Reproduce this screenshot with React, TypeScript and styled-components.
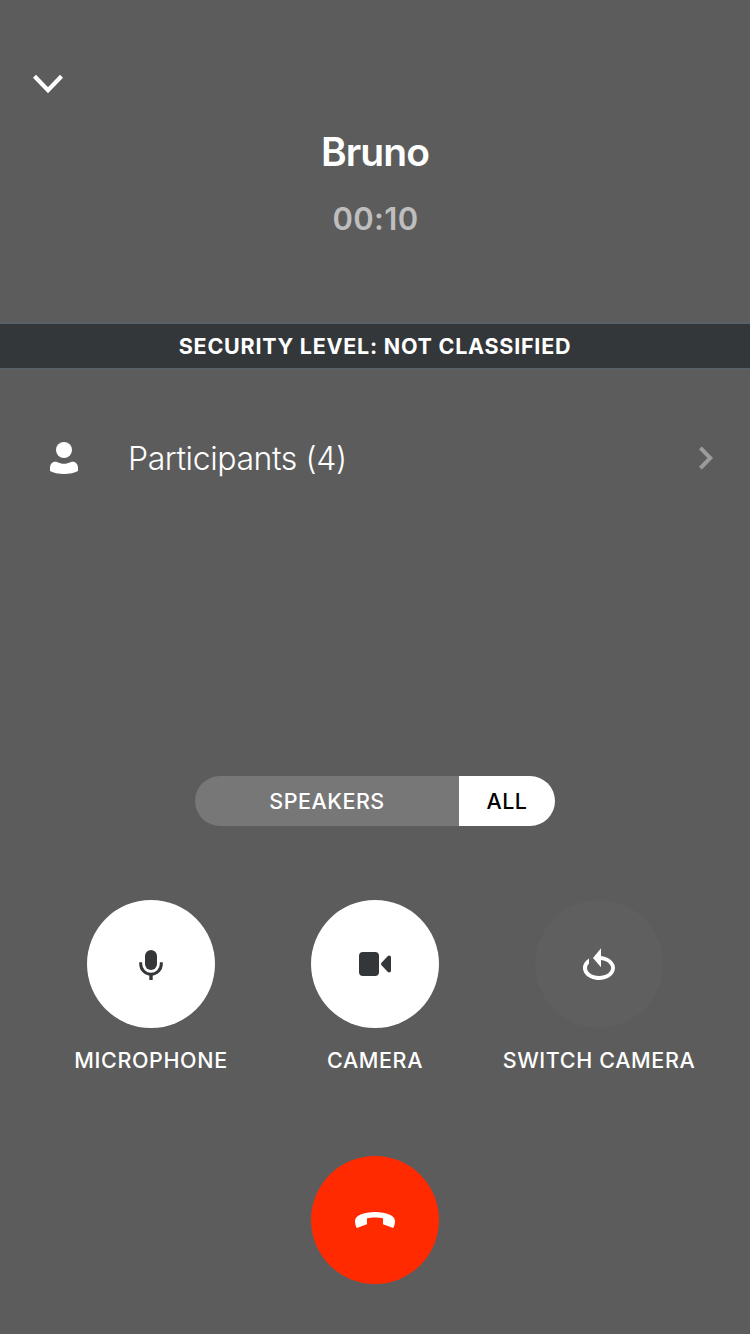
import React from 'react';
import styled, { createGlobalStyle } from 'styled-components';

const GlobalStyle = createGlobalStyle`
  * { box-sizing: border-box; }
  body { margin: 0; background: #5c5c5c; }
  button { border: 0; padding: 0; margin: 0; font: inherit; color: inherit; background: none; }
  svg { display: block; }
`;

const Screen = styled.main`
  width: 750px;
  height: 1334px;
  display: flex;
  flex-direction: column;
  background: #5c5c5c;
  color: #fff;
  font-family: Inter, 'Liberation Sans', sans-serif;
  white-space: nowrap;
  overflow: hidden;
`;

const Header = styled.header`
  height: 322px;
  display: flex;
  flex-direction: column;
  align-items: center;
`;

const MinimizeButton = styled.button`
  align-self: flex-start;
  margin: 74px 0 0 32px;
  height: 20px;
`;

const CallTitle = styled.h1`
  margin: 34px 0 0;
  font-size: 39px;
  line-height: 48px;
  font-weight: 600;
  letter-spacing: -0.9px;
`;

const Duration = styled.div`
  margin-top: 23px;
  padding-left: 1px;
  font-size: 31px;
  line-height: 40px;
  font-weight: 600;
  letter-spacing: 0.3px;
  color: #bebebe;
`;

const SecurityBanner = styled.div`
  height: 48px;
  border: solid #596168;
  border-width: 2px 0;
  background: #33373a;
  display: flex;
  align-items: center;
  justify-content: center;
  font-size: 21.5px;
  font-weight: 700;
  letter-spacing: 0.75px;
`;

const ParticipantsRow = styled.button`
  margin-top: 40px;
  height: 96px;
  padding: 0 36px 0 50px;
  display: flex;
  align-items: center;
  text-align: left;
`;

const RowLabel = styled.span`
  flex: 1;
  margin-left: 50px;
  font-size: 32px;
  font-weight: 300;
  letter-spacing: -0.4px;
`;

const Segments = styled.div`
  align-self: center;
  margin-top: 270px;
  width: 360px;
  height: 50px;
  border-radius: 25px;
  overflow: hidden;
  display: flex;
`;

const Segment = styled.button<{ $width: number; $selected?: boolean }>`
  width: ${p => p.$width}px;
  font-size: 21.5px;
  font-weight: 500;
  letter-spacing: 0.5px;
  background: ${p => (p.$selected ? '#fff' : '#777')};
  color: ${p => (p.$selected ? '#000' : '#fff')};
`;

const Controls = styled.div`
  margin-top: 74px;
  display: grid;
  grid-template-columns: repeat(3, 224px);
  justify-content: center;
`;

const Control = styled.div`
  display: flex;
  flex-direction: column;
  align-items: center;
`;

const RoundButton = styled.button<{ $fill: string }>`
  width: 128px;
  height: 128px;
  border-radius: 50%;
  background: ${p => p.$fill};
  display: flex;
  align-items: center;
  justify-content: center;
`;

const ControlLabel = styled.span`
  margin-top: 18px;
  font-size: 21.5px;
  line-height: 28px;
  font-weight: 500;
  letter-spacing: 0.63px;
`;

const Footer = styled.footer`
  margin-top: 82px;
  display: flex;
  justify-content: center;
`;

const MicIcon = () => (
  <svg width="32" height="32" viewBox="0 0 32 32">
    <rect x="10" y="2" width="12" height="20" rx="6" fill="#33373a" />
    <path d="M5.7 14.3V16a10.3 10.3 0 0 0 20.6 0v-1.7" fill="none" stroke="#33373a" strokeWidth="3" />
    <path d="M16 26v6" stroke="#33373a" strokeWidth="3.4" />
  </svg>
);

const CameraIcon = () => (
  <svg width="32" height="32" viewBox="0 0 32 32" fill="#33373a">
    <rect y="4" width="20" height="24" rx="4" />
    <path d="M22.5 14.8L28.6 8.3C30 6.9 32 7.6 32 9.5v13c0 1.9-2 2.6-3.4 1.2l-6.1-6.5a1.8 1.8 0 0 1 0-2.4z" />
  </svg>
);

const SwitchIcon = () => (
  <svg width="32" height="32" viewBox="0 0 32 32" fill="#fff">
    <path d="M18 .3L10 10l8 9.3v-7.2A12 8 0 1 1 6 15.6v-5A16 12 0 1 0 18 8.1z" />
  </svg>
);

const HangUpIcon = () => (
  <svg width="40" height="16" viewBox="0 0 40 16" fill="#fff">
    <path d="M0 9C0 3.5 8.5 0 20 0s20 3.5 20 9c0 2.5-.6 5-1.8 7L28 12.2V6.3c-2.5-.6-5-.9-8-.9s-5.5.3-8 .9v5.9L1.8 16C.6 14 0 11.5 0 9z" />
  </svg>
);

const PersonIcon = () => (
  <svg width="28" height="32" viewBox="0 0 28 32" fill="#fff">
    <circle cx="14" cy="8" r="8" />
    <path d="M0 26c0-3.8 2.2-6.2 5.2-6.2 2.6 0 4.3 2 8.8 2s6.2-2 8.8-2C25.8 19.8 28 22.2 28 26v3C24.5 31 19.5 32 14 32S3.5 31 0 29z" />
  </svg>
);

export default function App() {
  return (
    <>
      <GlobalStyle />
      <Screen>
        <Header>
          <MinimizeButton aria-label="Minimize call">
            <svg width="32" height="20" viewBox="0 0 32 20">
              <path d="M2.5 2.3L16 16.2L29.5 2.3" fill="none" stroke="#fff" strokeWidth="4.2" />
            </svg>
          </MinimizeButton>
          <CallTitle>Bruno</CallTitle>
          <Duration>00:10</Duration>
        </Header>
        <SecurityBanner>SECURITY LEVEL: NOT CLASSIFIED</SecurityBanner>
        <ParticipantsRow>
          <PersonIcon />
          <RowLabel>Participants (4)</RowLabel>
          <svg width="16" height="24" viewBox="0 0 16 24">
            <path d="M2.4 1.9L12.3 12L2.4 22.1" fill="none" stroke="#9b9b9b" strokeWidth="4" />
          </svg>
        </ParticipantsRow>
        <Segments>
          <Segment $width={264}>SPEAKERS</Segment>
          <Segment $width={96} $selected>ALL</Segment>
        </Segments>
        <Controls>
          <Control>
            <RoundButton $fill="#fff" aria-label="Microphone"><MicIcon /></RoundButton>
            <ControlLabel>MICROPHONE</ControlLabel>
          </Control>
          <Control>
            <RoundButton $fill="#fff" aria-label="Camera"><CameraIcon /></RoundButton>
            <ControlLabel>CAMERA</ControlLabel>
          </Control>
          <Control>
            <RoundButton $fill="#5f5f5f" aria-label="Switch camera"><SwitchIcon /></RoundButton>
            <ControlLabel>SWITCH CAMERA</ControlLabel>
          </Control>
        </Controls>
        <Footer>
          <RoundButton $fill="#ff2a00" aria-label="Hang up"><HangUpIcon /></RoundButton>
        </Footer>
      </Screen>
    </>
  );
}
